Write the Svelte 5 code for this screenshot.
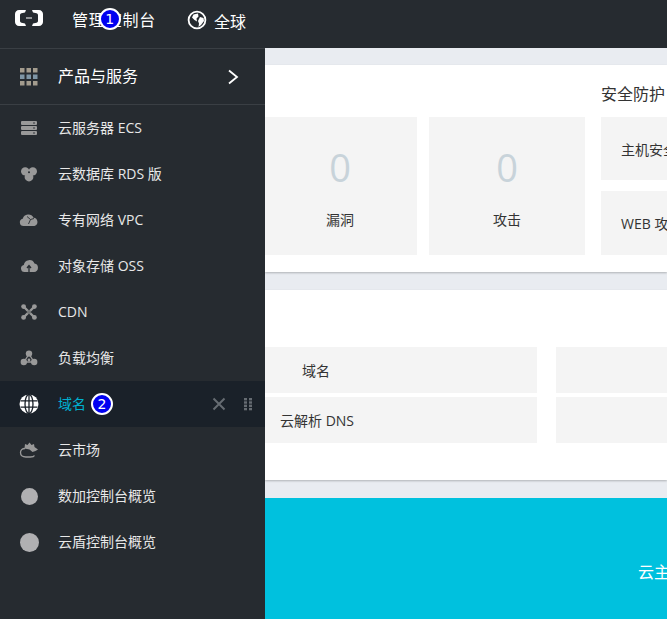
<script lang="ts">
  const items = [
    { name: 'ecs', label: '云服务器 ECS' },
    { name: 'rds', label: '云数据库 RDS 版' },
    { name: 'vpc', label: '专有网络 VPC' },
    { name: 'oss', label: '对象存储 OSS' },
    { name: 'cdn', label: 'CDN' },
    { name: 'slb', label: '负载均衡' },
    { name: 'domain', label: '域名', active: true },
    { name: 'market', label: '云市场' },
    { name: 'dot', label: '数加控制台概览' },
    { name: 'dotlg', label: '云盾控制台概览' },
  ];
</script>

{#snippet icon(name: string)}
  {#if name === 'ecs'}
    <svg width="18" height="18" viewBox="0 0 18 18" fill="#999">
      <rect x="1" y="2" width="16" height="4" rx="1" />
      <rect x="1" y="7" width="16" height="4" rx="1" />
      <rect x="1" y="12" width="16" height="4" rx="1" />
      <circle cx="14" cy="4" r="0.8" fill="#262b30" />
      <circle cx="14" cy="9" r="0.8" fill="#262b30" />
      <circle cx="14" cy="14" r="0.8" fill="#262b30" />
    </svg>
  {:else if name === 'rds'}
    <svg width="18" height="18" viewBox="0 0 18 18" fill="#999">
      <circle cx="5.200" cy="6.400" r="4.200" />
      <circle cx="12.800" cy="6.400" r="4.200" />
      <circle cx="9" cy="12" r="4.400" />
      <circle cx="9" cy="7.200" r="1" fill="#262b30" />
    </svg>
  {:else if name === 'vpc'}
    <svg width="20" height="18" viewBox="0 0 20 18" fill="#999">
      <path d="M4.500 15a3.700 3.700 0 0 1-.8-7.300A5.800 5.800 0 0 1 14.500 6.800 4.200 4.200 0 0 1 15.500 15z" />
      <path d="M8 5.500l3.500 3-2 4.500M11.500 8.500l3.500-1" fill="none" stroke="#262b30" stroke-width="0.900" />
    </svg>
  {:else if name === 'oss'}
    <svg width="18" height="18" viewBox="0 0 18 18" fill="#999">
      <path d="M4.400 15a3.600 3.600 0 0 1-.6-7.100A5.600 5.600 0 0 1 14.500 6.500 4.300 4.300 0 0 1 14 15z" />
      <path d="M9 8.500V15M7 11l2-2.500 2 2.500" fill="none" stroke="#262b30" stroke-width="1.300" />
    </svg>
  {:else if name === 'cdn'}
    <svg width="18" height="18" viewBox="0 0 18 18" fill="#999">
      <path d="M4 4l10 10M14 4L4 14" stroke="#999" stroke-width="2.400" />
      <circle cx="3.600" cy="3.600" r="2.400" />
      <circle cx="14.400" cy="3.600" r="2.400" />
      <circle cx="3.600" cy="14.400" r="2.400" />
      <circle cx="14.400" cy="14.400" r="2.400" />
      <circle cx="9" cy="9" r="2" fill="#262b30" opacity="0.300" />
    </svg>
  {:else if name === 'slb'}
    <svg width="18" height="18" viewBox="0 0 18 18" fill="#999">
      <path d="M9 5l-5 8h10z" fill="none" stroke="#999" stroke-width="1.400" />
      <circle cx="9" cy="4.600" r="3.200" />
      <circle cx="3.800" cy="13" r="3.200" />
      <circle cx="14.200" cy="13" r="3.200" />
      <circle cx="9" cy="11" r="1.400" />
    </svg>
  {:else if name === 'domain'}
    <svg width="20" height="20" viewBox="0 0 20 20" fill="none">
      <circle cx="10" cy="10" r="9.500" fill="#fff" />
      <g stroke="#1a2129" stroke-width="1.300">
        <ellipse cx="10" cy="10" rx="4" ry="9.500" />
        <path d="M10 .5v19M1.500 6.800h17M1.500 13.200h17" />
      </g>
    </svg>
  {:else if name === 'market'}
    <svg width="20" height="18" viewBox="0 0 20 18" fill="none">
      <path d="M6 7.500C3 7.500 1.500 9.500 1.500 11.500c0 3 2.500 4.500 5.500 4.500h4.500c2 0 3.500-.5 4-1.500" stroke="#999" stroke-width="1.300" />
      <path d="M5.500 7.500L6 3l2.500 1L10.500 1.500l2 2.500 2.500-1 .5 3 3.500 2.500-2.500 1.500-3 1-3-2.500-2.500-.5z" fill="#999" />
    </svg>
  {:else if name === 'dot'}
    <span class="dot"></span>
  {:else}
    <span class="dot lg"></span>
  {/if}
{/snippet}

<div class="page">
  <header class="topbar">
    <svg class="logo" width="28" height="16" viewBox="0 0 28 16" fill="#fff">
      <path d="M11 0H4C1.800 0 0 1.800 0 4v8c0 2.200 1.800 4 4 4h7l-1-2.500-3.500-.8C5.600 12.500 5 11.800 5 11V5c0-.8.600-1.500 1.500-1.700L10 2.500z" />
      <path d="M17 0h7c2.200 0 4 1.800 4 4v8c0 2.200-1.800 4-4 4h-7l1-2.500 3.500-.8c.9-.2 1.500-.9 1.500-1.700V5c0-.8-.6-1.500-1.500-1.700L18 2.500z" />
      <rect x="11" y="7.500" width="6" height="1" />
    </svg>
    <span class="console">管理控制台<span class="badge one">1</span></span>
    <svg class="globe" width="20" height="20" viewBox="0 0 20 20" fill="none">
      <circle cx="10" cy="10" r="8.400" stroke="#fff" stroke-width="1.800" />
      <path d="M6.500 4.500L11 3.500l.5 3-2 2 .5 3-2.500-1.500-2.500-2.500z" fill="#fff" />
      <path d="M13 7l3.500 1 .5 3-3 4-2.500 2 .5-3.500-1-2.500z" fill="#fff" />
    </svg>
    <span class="region">全球</span>
  </header>

  <div class="body">
    <aside class="sidebar">
      <div class="products">
        <svg class="grid-icon" width="18" height="18" viewBox="0 0 18 18">
          {#each [0, 6.5, 13] as y}
            {#each [0, 6.5, 13] as x}
              <rect {x} {y} width="4.500" height="4.500" fill={y === 6.5 ? '#7f96a6' : '#a39c8e'} />
            {/each}
          {/each}
        </svg>
        <span>产品与服务</span>
        <svg class="chevron" width="12" height="16" viewBox="0 0 12 16" fill="none">
          <path d="M2 1.500l8 6.500-8 6.500" stroke="#fff" stroke-width="1.800" />
        </svg>
      </div>
      <ul>
        {#each items as item}
          <li class:active={item.active}>
            <span class="icon">{@render icon(item.name)}</span>
            <span class="label">{item.label}</span>
            {#if item.active}
              <span class="badge two">2</span>
              <svg class="close" width="14" height="14" viewBox="0 0 14 14" fill="none">
                <path d="M1.500 1.500l11 11M12.500 1.500l-11 11" stroke="#666c72" stroke-width="2" />
              </svg>
              <svg class="drag" width="8" height="14" viewBox="0 0 8 14" fill="#666c72">
                {#each [1, 4.300, 7.600, 10.900] as y}
                  <rect x="0" {y} width="3" height="2.400" />
                  <rect x="5" {y} width="3" height="2.400" />
                {/each}
              </svg>
            {/if}
          </li>
        {/each}
      </ul>
    </aside>

    <main>
      <section class="panel security">
        <div class="stats">
          <div class="tile stat first"><b>0</b><span>漏洞</span></div>
          <div class="tile stat"><b>0</b><span>攻击</span></div>
        </div>
        <div class="guard">
          <h2>安全防护</h2>
          <div class="tile guard-row top">主机安全</div>
          <div class="tile guard-row">WEB 攻击</div>
        </div>
      </section>

      <section class="panel services">
        <div class="tile svc"><span class="indent">域名</span></div>
        <div class="tile svc right"></div>
        <div class="tile svc"><span>云解析 DNS</span></div>
        <div class="tile svc right"></div>
      </section>

      <section class="banner"><span>云主机</span></section>
    </main>
  </div>
</div>

<style>
  :global(body) {
    margin: 0;
    overflow: hidden;
  }

  .page {
    width: 667px;
    height: 619px;
    overflow: hidden;
    background: #e9ecf1;
    font-family: 'Open Sans', 'Noto Sans CJK SC', sans-serif;
    color: #333;
  }

  .topbar {
    height: 48px;
    background: #262b30;
    color: #fff;
    display: flex;
    align-items: center;
    font-size: 16px;
  }

  .logo {
    margin-left: 15px;
    margin-top: -12px;
  }

  .console {
    position: relative;
    margin-left: 29px;
    margin-top: -10px;
    letter-spacing: 0.8px;
    white-space: nowrap;
  }

  .globe {
    margin-left: 31px;
    margin-top: -8px;
  }

  .region {
    margin-left: 7px;
    margin-top: -7px;
  }

  .badge {
    box-sizing: border-box;
    display: flex;
    align-items: center;
    justify-content: center;
    width: 22px;
    height: 22px;
    border-radius: 50%;
    background: #0000f0;
    border: 2px solid #fff;
    color: #fff;
    font: 14px/1 'DejaVu Sans', sans-serif;
  }

  .one {
    position: absolute;
    left: 27px;
    top: 1px;
  }

  .two {
    margin-left: 5px;
  }

  .body {
    display: flex;
    height: 571px;
  }

  .sidebar {
    flex: none;
    width: 265px;
    background: #262b30;
    color: #fff;
    border-top: 1px solid #3a3f44;
    box-sizing: border-box;
  }

  .products {
    display: flex;
    align-items: center;
    height: 55px;
    border-bottom: 1px solid #3a3f44;
    padding-left: 20px;
    font-size: 16px;
  }

  .products span {
    margin-left: 20px;
    margin-top: -3px;
  }

  .chevron {
    margin-left: auto;
    margin-right: 26px;
  }

  ul {
    list-style: none;
    margin: 0;
    padding: 0;
  }

  li {
    display: flex;
    align-items: center;
    height: 46px;
    font-size: 14px;
    color: #e8e8e8;
  }

  li.active {
    background: #1a2129;
    color: #00b0d0;
  }

  .label {
    margin-top: -2px;
  }

  .icon {
    flex: none;
    display: flex;
    justify-content: center;
    align-items: center;
    width: 20px;
    margin: 0 19px 0 19px;
  }

  .dot {
    width: 17px;
    height: 17px;
    border-radius: 50%;
    background: #b0b0b2;
  }

  .dot.lg {
    width: 19px;
    height: 19px;
  }

  .close {
    margin-left: auto;
  }

  .drag {
    margin: 0 13px 0 18px;
  }

  main {
    flex: 1;
    min-width: 0;
    overflow: hidden;
    padding-top: 17px;
  }

  .panel {
    background: #fff;
    box-shadow: 0 1px 2px rgba(0, 0, 0, 0.25);
  }

  .security {
    display: flex;
    height: 207px;
    box-sizing: border-box;
    padding-top: 52px;
    margin-bottom: 18px;
  }

  .tile {
    background: #f4f4f4;
    flex: none;
  }

  .stats {
    display: flex;
    gap: 12px;
    flex: none;
  }

  .stat {
    width: 156px;
    height: 138px;
    display: flex;
    flex-direction: column;
    align-items: center;
    font-size: 14px;
  }

  .stat b {
    font-weight: 400;
    font-size: 38px;
    line-height: 50px;
    margin-top: 25px;
    color: #c8d3da;
  }

  .stat span {
    margin-top: 18px;
    line-height: 20px;
  }

  .first {
    width: 154px;
    margin-left: -2px;
  }

  .guard {
    position: relative;
    flex: none;
    width: 200px;
    margin-left: 16px;
    display: flex;
    flex-direction: column;
    gap: 11px;
  }

  .guard h2 {
    position: absolute;
    top: -34px;
    left: 0;
    margin: 0;
    font-size: 16px;
    font-weight: 400;
    line-height: 22px;
    white-space: nowrap;
  }

  .guard-row {
    height: 64px;
    padding-left: 20px;
    display: flex;
    align-items: center;
    font-size: 14px;
    white-space: nowrap;
  }

  .guard-row.top {
    height: 63px;
  }

  .services {
    height: 190px;
    box-sizing: border-box;
    padding-top: 57px;
    margin-bottom: 18px;
    display: grid;
    grid-template-columns: 272px 200px;
    grid-auto-rows: 46px;
    column-gap: 19px;
    row-gap: 4px;
    font-size: 14px;
    overflow: hidden;
  }

  .svc {
    display: flex;
    align-items: center;
    padding-left: 15px;
  }

  .indent {
    margin-left: 22px;
  }

  .banner {
    height: 121px;
    box-sizing: border-box;
    padding: 25px 0 0 373px;
    background: #00c1de;
    color: #fff;
    font-size: 16px;
    display: flex;
    align-items: center;
    white-space: nowrap;
    overflow: hidden;
  }
</style>
